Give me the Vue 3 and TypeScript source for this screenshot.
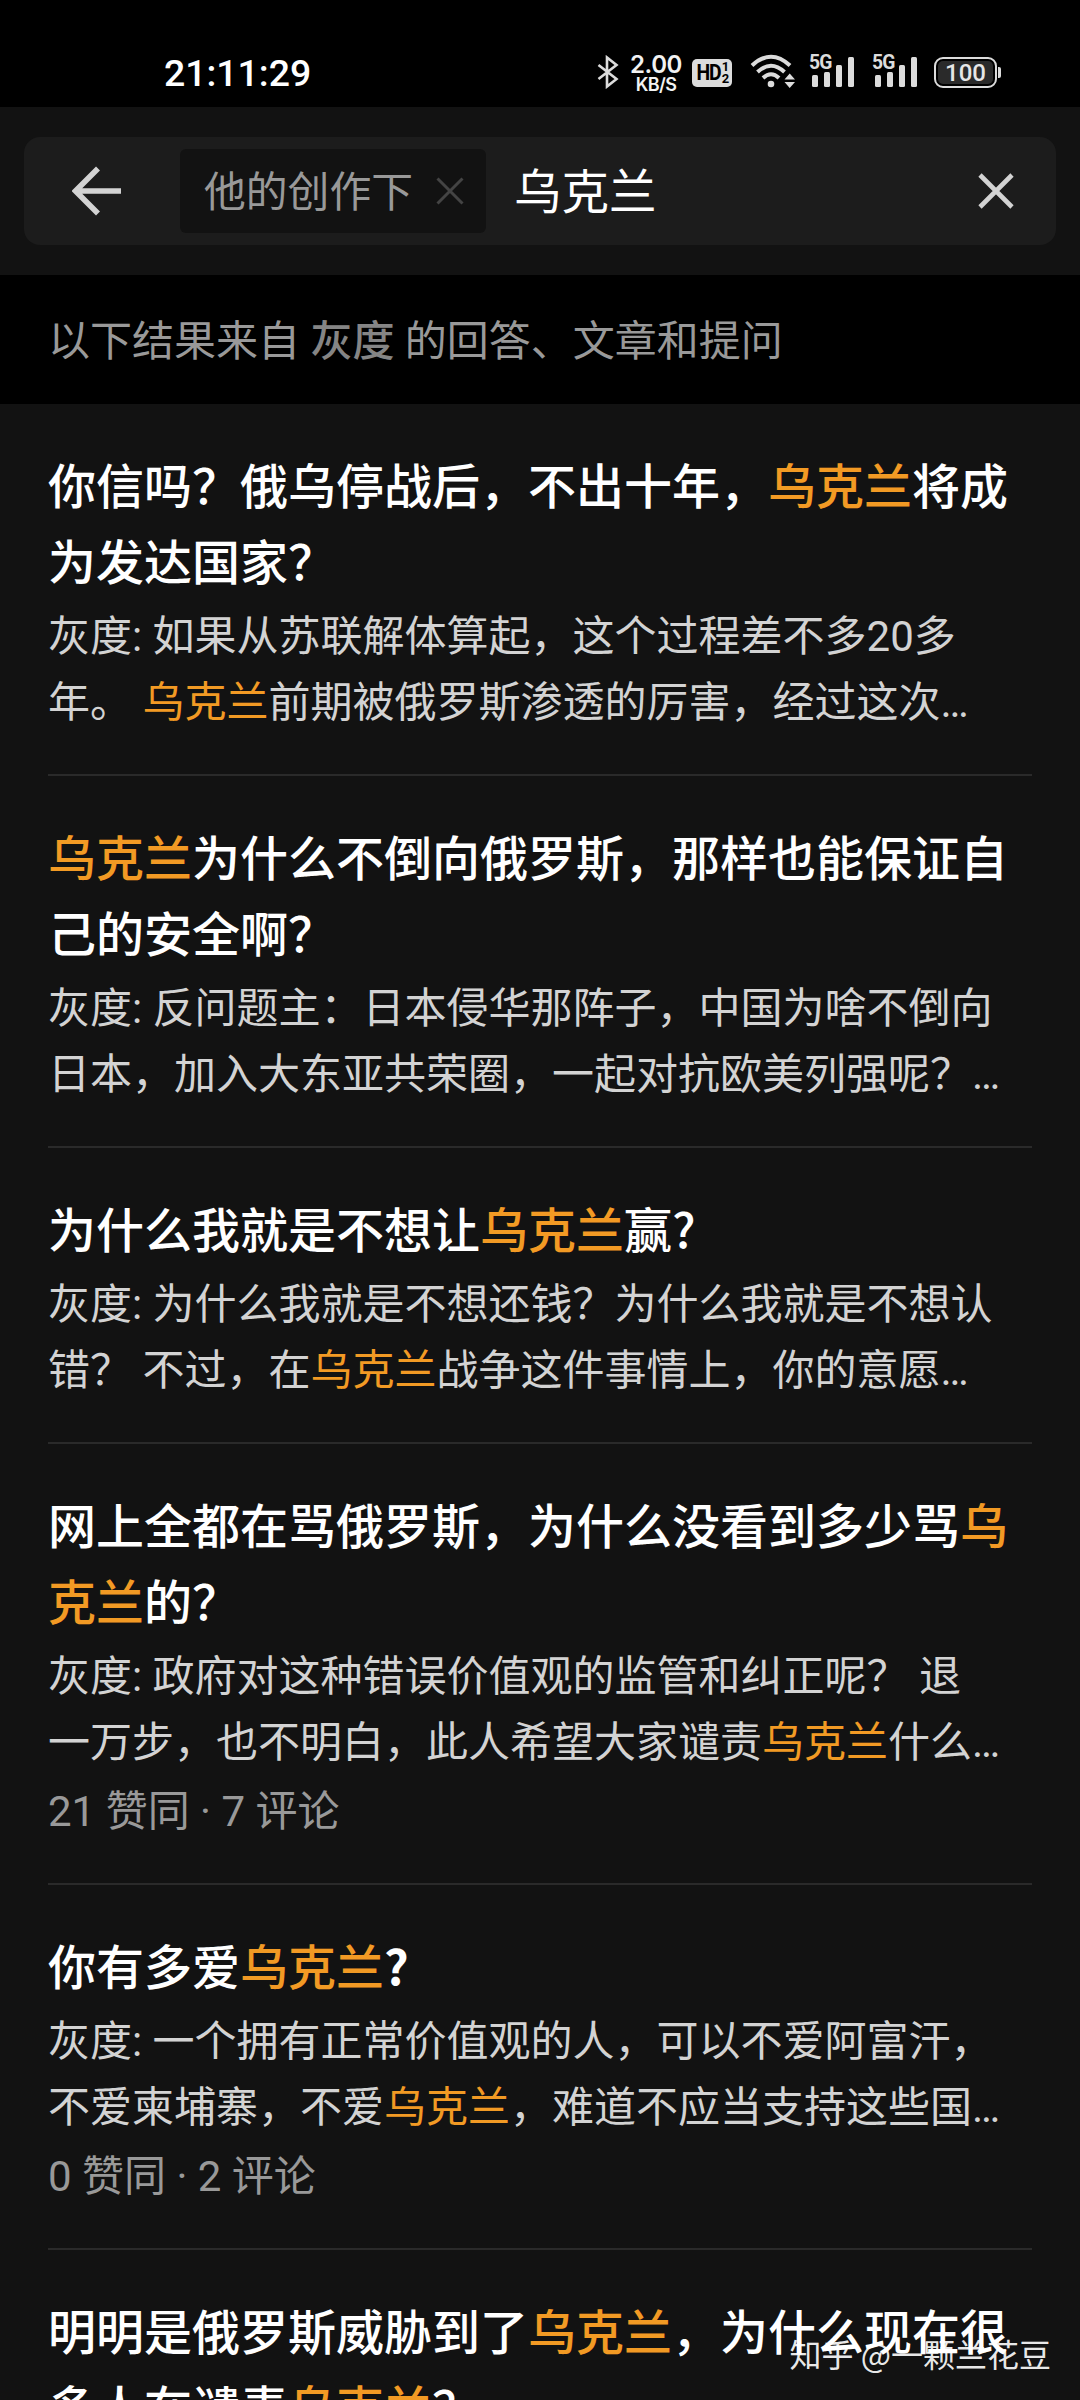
<script setup lang="ts">
interface Part {
  text: string
  hit: boolean
}

interface Result {
  title: string[]
  excerpt: string[]
  meta?: string
  strongEnd?: boolean
}

const keyword = '乌克兰'

// Square brackets mark the highlighted part of a line.
const results: Result[] = [
  {
    title: ['你信吗？俄乌停战后，不出十年，[乌克兰]将成', '为发达国家？'],
    excerpt: ['灰度: 如果从苏联解体算起，这个过程差不多20多', '年。 [乌克兰]前期被俄罗斯渗透的厉害，经过这次…'],
  },
  {
    title: ['[乌克兰]为什么不倒向俄罗斯，那样也能保证自', '己的安全啊？'],
    excerpt: ['灰度: 反问题主：日本侵华那阵子，中国为啥不倒向', '日本，加入大东亚共荣圈，一起对抗欧美列强呢？…'],
  },
  {
    title: ['为什么我就是不想让[乌克兰]赢?'],
    excerpt: ['灰度: 为什么我就是不想还钱？为什么我就是不想认', '错？ 不过，在[乌克兰]战争这件事情上，你的意愿…'],
  },
  {
    title: ['网上全都在骂俄罗斯，为什么没看到多少骂[乌]', '[克兰]的？'],
    excerpt: ['灰度: 政府对这种错误价值观的监管和纠正呢？ 退', '一万步，也不明白，此人希望大家谴责[乌克兰]什么…'],
    meta: '21 赞同 · 7 评论',
  },
  {
    title: ['你有多爱[乌克兰]?'],
    excerpt: ['灰度: 一个拥有正常价值观的人，可以不爱阿富汗，', '不爱柬埔寨，不爱[乌克兰]，难道不应当支持这些国…'],
    meta: '0 赞同 · 2 评论',
    strongEnd: true,
  },
  {
    title: ['明明是俄罗斯威胁到了[乌克兰]，为什么现在很', '多人在谴责[乌克兰]？'],
    excerpt: [],
  },
]

function split(line: string): Part[] {
  return line
    .split(/(\[[^\]]*\])/)
    .filter((s) => s.length > 0)
    .map((s) => (s.startsWith('[') ? { text: s.slice(1, -1), hit: true } : { text: s, hit: false }))
}
</script>

<template>
  <div class="screen" lang="zh-CN">
    <header class="status">
      <span class="clock">21:11:29</span>
      <div class="indicators">
        <svg class="bt" width="22" height="34" viewBox="0 0 22 34">
          <path d="M1.500 10 19.500 24 10 31.500V2.500L19.500 10 1.500 24" fill="none" stroke="#dcdcdc" stroke-width="2.600" />
        </svg>
        <div class="speed"><b>2.00</b><span>KB/S</span></div>
        <div class="hd"><span class="hd-label">HD</span><span class="hd-sims"><i>1</i><i>2</i></span></div>
        <svg class="wifi" width="46" height="36" viewBox="0 0 46 36">
          <g fill="none" stroke="#dcdcdc" stroke-width="4">
            <path d="M2 11.500Q21-6 40 11.500" />
            <path d="M7.500 18Q21 5.500 34.500 18" />
            <path d="M13 24Q21 16.500 29 24" />
          </g>
          <circle cx="21" cy="30" r="3.300" fill="#dcdcdc" />
          <path d="M34.500 25.500 39.700 19.500 45 25.500ZM34.500 28 39.700 34 45 28Z" fill="#dcdcdc" />
        </svg>
        <div v-for="n in 2" :key="n" class="signal">
          <span class="net">5G</span>
          <div class="bars"><i class="b1" /><i class="b2" /><i class="b3" /><i class="b4" /></div>
        </div>
        <div class="battery"><span class="level">100</span></div>
        <i class="tip" />
      </div>
    </header>

    <div class="top">
      <div class="search">
        <svg class="back" width="50" height="50" viewBox="0 0 50 50">
          <path d="M49 25H5M26 2.500 3.500 25 26 47.500" fill="none" stroke="#d3d3d3" stroke-width="5.600" />
        </svg>
        <div class="chip">
          <span class="scope">他的创作下</span>
          <svg width="28" height="28" viewBox="0 0 28 28">
            <path d="M1.500 1.500 26.500 26.500M26.500 1.500 1.500 26.500" stroke="#444" stroke-width="3" />
          </svg>
        </div>
        <span class="query">{{ keyword }}</span>
        <svg class="clear" width="36" height="36" viewBox="0 0 36 36">
          <path d="M2 2 34 34M34 2 2 34" stroke="#d3d3d3" stroke-width="4.600" />
        </svg>
      </div>
    </div>

    <p class="notice">以下结果来自 <b>灰度</b> 的回答、文章和提问</p>

    <main>
      <article v-for="(r, i) in results" :key="i" class="item">
        <h2 :class="{ 'strong-end': r.strongEnd }">
          <div v-for="(line, j) in r.title" :key="j" class="line"><span v-for="(p, k) in split(line)" :key="k" :class="{ hit: p.hit }">{{ p.text }}</span></div>
        </h2>
        <div v-if="r.excerpt.length" class="excerpt">
          <div v-for="(line, j) in r.excerpt" :key="j" class="line"><span v-for="(p, k) in split(line)" :key="k" :class="{ hit: p.hit }">{{ p.text }}</span></div>
        </div>
        <div v-if="r.meta" class="meta">{{ r.meta }}</div>
      </article>
    </main>

    <div class="watermark">知乎 @一颗兰花豆</div>
  </div>
</template>

<style>
body {
  background: #121212;
}
</style>

<style scoped>
.screen {
  position: relative;
  width: 1080px;
  height: 2400px;
  overflow: hidden;
  background: #121212;
  color: #fff;
  font-family: 'Noto Sans CJK SC', sans-serif;
}
i {
  font-style: normal;
}
svg {
  display: block;
  flex: none;
}
.status {
  display: flex;
  justify-content: space-between;
  box-sizing: border-box;
  height: 107px;
  padding: 0 79px 0 164px;
  background: #000;
  font-family: Roboto, sans-serif;
}
.clock {
  margin-top: 51px;
  font-size: 37.400px;
  line-height: 44px;
  font-weight: 500;
}
.indicators {
  display: flex;
  align-items: flex-start;
}
.bt {
  margin: 55px 0 0;
}
.speed {
  display: flex;
  flex-direction: column;
  align-items: center;
  width: 52px;
  margin: 54px 0 0 11px;
  color: #f2f2f2;
  font-family: Inter, sans-serif;
}
.speed b {
  font-size: 24px;
  line-height: 21px;
  font-weight: 600;
  letter-spacing: -0.4px;
}
.speed span {
  font-size: 18px;
  line-height: 19px;
  font-weight: 600;
  letter-spacing: -0.6px;
}
.hd {
  display: flex;
  justify-content: center;
  width: 40px;
  height: 28px;
  margin: 59px 0 0 10px;
  border-radius: 5px;
  background: #dcdcdc;
  color: #000;
}
.hd-label {
  font-size: 22px;
  line-height: 28px;
  font-weight: 700;
  letter-spacing: -1.5px;
  transform: scaleX(0.88);
}
.hd-sims {
  display: flex;
  flex-direction: column;
  padding-top: 2px;
  font-size: 13px;
  line-height: 12px;
  font-weight: 700;
}
.wifi {
  margin: 54px 0 0 18px;
}
.signal {
  width: 46px;
  height: 33px;
  margin: 54px 0 0 13px;
  color: #dcdcdc;
}
.signal + .signal {
  margin-left: 17px;
}
.net {
  display: block;
  height: 3px;
  font-size: 21px;
  line-height: 17px;
  font-weight: 700;
  letter-spacing: -1px;
  transform: scaleX(0.92);
  transform-origin: left;
}
.bars {
  display: flex;
  align-items: flex-end;
  gap: 6px;
  height: 30px;
  padding-left: 3px;
}
.bars i {
  width: 6px;
  border-radius: 1.5px;
  background: #dcdcdc;
}
.b1 {
  height: 12px;
}
.b2 {
  height: 15px;
}
.b3 {
  height: 22px;
}
.b4 {
  height: 30px;
}
.battery {
  box-sizing: border-box;
  width: 63px;
  height: 31px;
  margin: 57px 0 0 16px;
  padding: 2px;
  border: 2px solid #dcdcdc;
  border-radius: 9px;
}
.level {
  display: block;
  height: 23px;
  border-radius: 5px;
  background: #2a2a2a;
  color: #e6e6e6;
  font-size: 24px;
  line-height: 24px;
  font-weight: 500;
  text-align: center;
}
.tip {
  width: 3px;
  height: 11px;
  margin: 67px 0 0 1px;
  border-radius: 0 2px 2px 0;
  background: #dcdcdc;
}
.top {
  box-sizing: border-box;
  height: 168px;
  padding: 30px 24px 0;
}
.search {
  display: flex;
  align-items: center;
  box-sizing: border-box;
  height: 108px;
  padding: 0 42px 0 48px;
  border-radius: 16px;
  background: #1c1c1c;
}
.chip {
  display: flex;
  align-items: center;
  justify-content: space-between;
  box-sizing: border-box;
  width: 306px;
  height: 84px;
  margin-left: 58px;
  padding: 0 22px 0 24px;
  border-radius: 6px;
  background: #121212;
  color: #999;
  font-size: 41.800px;
}
.scope {
  padding-bottom: 4px;
}
.query {
  flex: 1;
  margin-left: 28px;
  padding-bottom: 5px;
  font-size: 47.500px;
}
.notice {
  margin: 0;
  height: 127px;
  padding: 2px 0 0 48px;
  background: #000;
  color: #999;
  font-family: Roboto, 'Noto Sans CJK SC', sans-serif;
  font-size: 42px;
  line-height: 129px;
  white-space: nowrap;
}
.notice b {
  color: #858585;
  font-weight: 500;
}
.item {
  margin-left: 48px;
  width: 984px;
  padding: 41px 0 38px;
  border-bottom: 2px solid #2a2a2a;
}
h2 {
  margin: 0;
  font-size: 48px;
  line-height: 76px;
  font-weight: 500;
}
.line {
  white-space: nowrap;
}
.strong-end .line span:last-child {
  font-weight: 700;
}
.hit {
  color: #f29a24;
}
.excerpt,
.meta {
  color: #d3d3d3;
  font-family: Roboto, 'Noto Sans CJK SC', sans-serif;
  font-size: 42px;
  line-height: 66px;
}
.excerpt {
  margin-top: 7px;
}
.meta {
  margin-top: 3px;
  color: #999;
}
.watermark {
  position: absolute;
  right: 29px;
  bottom: 24px;
  color: rgba(255, 255, 255, 0.92);
  font-size: 32px;
  line-height: 46px;
  white-space: nowrap;
}
</style>
